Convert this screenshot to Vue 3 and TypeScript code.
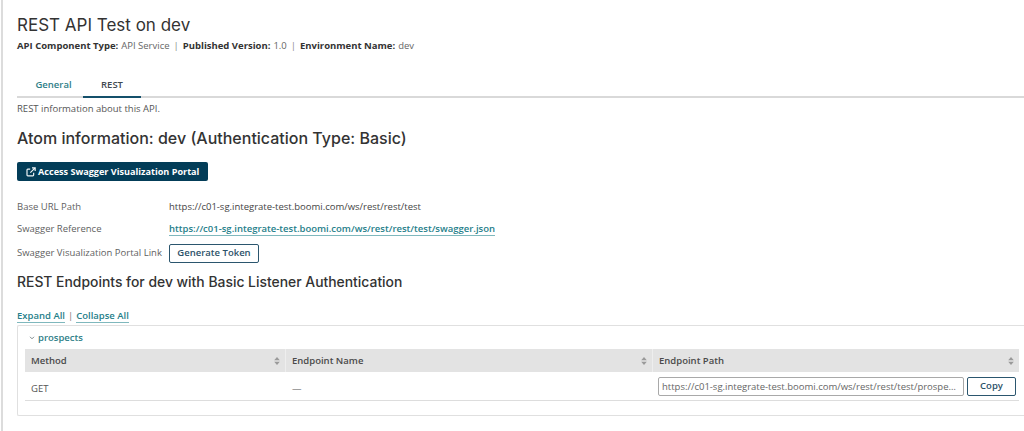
<script setup lang="ts">
interface Meta { label: string; value: string }
const meta: Meta[] = [
  { label: 'API Component Type:', value: 'API Service' },
  { label: 'Published Version:', value: '1.0' },
  { label: 'Environment Name:', value: 'dev' },
]
const base = 'https://c01-sg.integrate-test.boomi.com/ws/rest/rest/test'
const columns = ['Method', 'Endpoint Name', 'Endpoint Path']
</script>

<template>
  <div class="page">
    <h1 class="title">REST API Test on dev</h1>
    <div class="meta">
      <template v-for="(m, i) in meta" :key="m.label">
        <span v-if="i" class="sep">|</span>
        <b>{{ m.label }}</b><span class="val">{{ m.value }}</span>
      </template>
    </div>

    <div class="tabs">
      <a class="tab">General</a>
      <a class="tab active">REST</a>
    </div>

    <p class="info">REST information about this API.</p>
    <h2 class="h-atom">Atom information: dev (Authentication Type: Basic)</h2>

    <button class="primary" type="button">
      <svg width="10" height="10" viewBox="0 0 12 12" fill="none" stroke="#f2f6f8" stroke-width="1.4">
        <path d="M9.2 7v2.6a1 1 0 0 1-1 1H2.2a1 1 0 0 1-1-1V3.6a1 1 0 0 1 1-1H5" />
        <path d="M7.2 1h3.8v3.8M11 1 5.2 6.8" />
      </svg>
      Access Swagger Visualization Portal
    </button>

    <div class="props">
      <div class="prop-label r1">Base URL Path</div>
      <div class="r1 val2">{{ base }}</div>
      <div class="prop-label r2">Swagger Reference</div>
      <div class="r2"><a class="link">{{ base }}/swagger.json</a></div>
      <div class="prop-label r3">Swagger Visualization Portal Link</div>
      <div class="r3"><button class="outline gen" type="button">Generate Token</button></div>
    </div>

    <h2 class="h-rest">REST Endpoints for dev with Basic Listener Authentication</h2>

    <div class="expand">
      <a class="link">Expand All</a><span class="sep2">|</span><a class="link">Collapse All</a>
    </div>

    <section class="panel">
      <div class="group">
        <svg class="chev" width="6" height="4" viewBox="0 0 7 5" fill="none" stroke="#5f6f73" stroke-width="1">
          <path d="M1 1l2.5 2.5L6 1" />
        </svg>
        prospects
      </div>
      <div class="grid head">
        <div v-for="c in columns" :key="c" class="th">
          <span>{{ c }}</span>
          <svg width="6" height="8" viewBox="0 0 7 10" fill="#9a9a9a">
            <path d="M3.5 0 7 4H0zM3.5 10 0 6h7z" />
          </svg>
        </div>
      </div>
      <div class="grid row">
        <div class="td plain">GET</div>
        <div class="td plain">—</div>
        <div class="td path">
          <div class="input">{{ base }}/prospects/</div>
          <button class="outline copy" type="button">Copy</button>
        </div>
      </div>
    </section>
  </div>
</template>

<style>
html, body { margin: 0; background: #fff; overflow: hidden; }
</style>

<style scoped>
.page {
  box-sizing: border-box;
  height: 431px;
  padding: 14px 0 0 14px;
  margin-left: 1px;
  border-left: 2px solid #dcdcdc;
  font: 9.5px/12px "Open Sans", sans-serif;
  color: #4f4f4f;
  overflow: hidden;
}
.title {
  margin: 0;
  font: 400 17px/22px "Inter", sans-serif;
  color: #333;
}
.meta { margin-top: 4px; height: 12px; color: #666; white-space: nowrap; }
.meta b { font-weight: 700; color: #333; margin-right: 3px; }
.sep { margin: 0 4px; color: #888; }
.tabs {
  display: flex;
  margin-top: 20px;
  height: 24px;
  border-bottom: 2px solid #d9d9d9;
}
.tab {
  width: 58px;
  text-align: center;
  line-height: 25px;
  font-weight: 600;
  color: #2f8088;
}
.tab:first-child { width: 59px; padding-left: 7px; }
.active { color: #3f4a50; border-bottom: 2px solid #14506b; height: 24px; margin-bottom: -2px; }
.info { margin: 5px 0 0; height: 12px; color: #555; }
.h-atom {
  margin: 13px 0 0;
  font: 500 16px/20px "Inter", sans-serif;
  color: #333;
}
.primary {
  display: flex;
  align-items: center;
  gap: 2px;
  margin-top: 14px;
  width: 191px;
  height: 19px;
  padding: 0 0 0 9px;
  border: 0;
  border-radius: 2px;
  background: #033d58;
  color: #fff;
  font: 700 9.1px/19px "Open Sans", sans-serif;
  white-space: nowrap;
}
.props {
  display: grid;
  grid-template-columns: 152px 1fr;
  grid-template-rows: 20px 24px 24px;
  margin-top: 16px;
  align-items: center;
}
.prop-label { color: #5f5f5f; }
.val2 { color: #444; }
.link {
  color: #26808a;
  font-weight: 600;
  border-bottom: 1px solid #7fb8bd;
  display: inline-block;
  line-height: 12px;
}
.outline {
  border: 1px solid #2b566e;
  border-radius: 2px;
  background: #fff;
  color: #2c5269;
  font: 600 9.5px/16px "Open Sans", sans-serif;
  padding: 0;
}
.gen { width: 90px; height: 19px; }
.h-rest {
  margin: 8px 0 0;
  font: 500 13.9px/18px "Inter", sans-serif;
  color: #333;
}
.expand { margin-top: 19px; height: 13px; }
.sep2 { margin: 0 3px; color: #777; }
.panel {
  box-sizing: border-box;
  height: 91px;
  margin-top: 2px;
  border: 1px solid #e0e0e0;
  border-right: 0;
  border-radius: 2px 0 0 2px;
  padding: 0 5px 0 7px;
}
.group {
  height: 23px;
  display: flex;
  align-items: center;
  gap: 3px;
  padding-left: 4px;
  color: #2f8088;
  font-weight: 600;
}
.chev { margin-top: 1px; }
.grid { display: grid; grid-template-columns: 261px 367px 1fr; }
.head { background: #e3e3e3; height: 23px; }
.th {
  display: flex;
  align-items: center;
  justify-content: space-between;
  padding: 0 5px 0 6px;
  font-weight: 600;
  color: #4a4a4a;
  border-right: 1px solid #eee;
}
.th:last-child { border-right: 0; }
.row { height: 28px; border-bottom: 1px solid #ddd; }
.td { display: flex; align-items: center; padding-left: 6px; color: #555; }
.plain { padding-top: 5px; }
.path { gap: 3px; padding-left: 5px; }
.input {
  box-sizing: border-box;
  width: 306px;
  height: 19px;
  border: 1px solid #a9a9a9;
  border-radius: 2px;
  padding: 0 3px;
  line-height: 17px;
  color: #666;
  white-space: nowrap;
  overflow: hidden;
  text-overflow: ellipsis;
}
.copy { width: 49px; height: 19px; }
</style>
